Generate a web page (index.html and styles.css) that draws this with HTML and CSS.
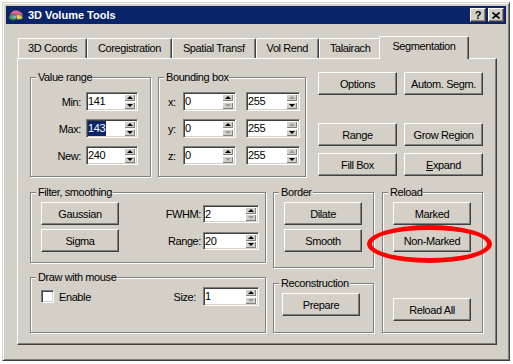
FILE: index.html
```html
<!DOCTYPE html>
<html lang="en">
<head>
    <meta charset="UTF-8">
    <meta name="viewport" content="width=device-width, initial-scale=1.0">
    <title>3D Volume Tools</title>
    <link rel="stylesheet" href="styles.css">
</head>
<body>
    <div class="window">
        <div class="titlebar">
            <svg class="app-icon" width="16" height="16" viewBox="0 0 16 16">
                <path d="M2 9 C2 5 6 2.5 9 3.5 C12 4 15 6 14.5 9 Z" fill="#e0609a" stroke="#505050" stroke-width=".7"/>
                <path d="M1 11 C1 8 4 6.5 7 7.5 L9 12 C6 13.5 3 13.5 1 11 Z" fill="#3fa04e" stroke="#505050" stroke-width=".7"/>
                <path d="M8 8 C11 7 14 8 15 11 C12 13 10 12.5 8.5 12 Z" fill="#e6d24a" stroke="#505050" stroke-width=".7"/>
                <ellipse cx="6.5" cy="10" rx="2" ry="1.4" fill="#86a8e0"/>
            </svg>
            <span class="title">3D Volume Tools</span>
            <div class="caption-btns">
                <span class="cap-btn help">?</span>
                <span class="cap-btn close">
                    <svg width="8" height="7" viewBox="0 0 8 7"><path d="M0.5 0.5 L7.5 6.5 M7.5 0.5 L0.5 6.5" stroke="#000" stroke-width="1.6"/></svg>
                </span>
            </div>
        </div>

        <div class="tabs">
            <div class="tab">3D Coords</div>
            <div class="tab">Coregistration</div>
            <div class="tab">Spatial Transf</div>
            <div class="tab">Vol Rend</div>
            <div class="tab">Talairach</div>
            <div class="tab active">Segmentation</div>
        </div>

        <div class="panel">
            <div class="top-row">
                <div class="group value-range">
                    <div class="group-title">Value range</div>
                    <div class="field">
                        <label>Min:</label>
                        <div class="spin w52"><span class="val">141</span><div class="spinner"><span class="up"></span><span class="down"></span></div></div>
                    </div>
                    <div class="field">
                        <label>Max:</label>
                        <div class="spin w52"><span class="val"><span class="sel">143</span></span><div class="spinner"><span class="up"></span><span class="down"></span></div></div>
                    </div>
                    <div class="field">
                        <label>New:</label>
                        <div class="spin w52"><span class="val">240</span><div class="spinner"><span class="up"></span><span class="down"></span></div></div>
                    </div>
                </div>

                <div class="group bbox">
                    <div class="group-title">Bounding box</div>
                    <div class="field">
                        <label>x:</label>
                        <div class="spin w53"><span class="val">0</span><div class="spinner"><span class="up"></span><span class="down off"></span></div></div>
                        <div class="spin w54"><span class="val">255</span><div class="spinner"><span class="up off"></span><span class="down"></span></div></div>
                    </div>
                    <div class="field">
                        <label>y:</label>
                        <div class="spin w53"><span class="val">0</span><div class="spinner"><span class="up"></span><span class="down off"></span></div></div>
                        <div class="spin w54"><span class="val">255</span><div class="spinner"><span class="up off"></span><span class="down"></span></div></div>
                    </div>
                    <div class="field">
                        <label>z:</label>
                        <div class="spin w53"><span class="val">0</span><div class="spinner"><span class="up"></span><span class="down off"></span></div></div>
                        <div class="spin w54"><span class="val">255</span><div class="spinner"><span class="up off"></span><span class="down"></span></div></div>
                    </div>
                </div>

                <div class="btn-grid">
                    <button class="btn">Options</button>
                    <button class="btn">Autom. Segm.</button>
                    <div class="gap"></div>
                    <button class="btn">Range</button>
                    <button class="btn">Grow Region</button>
                    <button class="btn">Fill Box</button>
                    <button class="btn"><u>E</u>xpand</button>
                </div>
            </div>

            <div class="bottom-row">
                <div class="col">
                    <div class="group filter">
                        <div class="group-title">Filter, smoothing</div>
                        <div class="line">
                            <button class="btn">Gaussian</button>
                            <div class="pair">
                                <label>FWHM:</label>
                                <div class="spin w56 short"><span class="val">2</span><div class="spinner"><span class="up"></span><span class="down off"></span></div></div>
                            </div>
                        </div>
                        <div class="line">
                            <button class="btn">Sigma</button>
                            <div class="pair">
                                <label>Range:</label>
                                <div class="spin w56 short"><span class="val">20</span><div class="spinner"><span class="up"></span><span class="down"></span></div></div>
                            </div>
                        </div>
                    </div>

                    <div class="group draw">
                        <div class="group-title">Draw with mouse</div>
                        <div class="line small">
                            <div class="pair">
                                <span class="check"></span>
                                <span class="check-label">Enable</span>
                            </div>
                            <div class="pair">
                                <label class="size-label">Size:</label>
                                <div class="spin w56"><span class="val">1</span><div class="spinner"><span class="up"></span><span class="down off"></span></div></div>
                            </div>
                        </div>
                    </div>
                </div>

                <div class="col mid">
                    <div class="group border-grp">
                        <div class="group-title">Border</div>
                        <button class="btn first">Dilate</button>
                        <button class="btn next">Smooth</button>
                    </div>
                    <div class="group recon">
                        <div class="group-title">Reconstruction</div>
                        <button class="btn first">Prepare</button>
                    </div>
                </div>

                <div class="col last">
                    <div class="group reload">
                        <div class="group-title">Reload</div>
                        <button class="btn first">Marked</button>
                        <button class="btn next">Non-Marked</button>
                        <button class="btn all">Reload All</button>
                        <div class="mark"></div>
                    </div>
                </div>
            </div>
        </div>
    </div>
</body>
</html>
```

FILE: styles.css
```css
body {
    margin: 0;
    background: #fff;
    font-family: "Liberation Sans", Arial, sans-serif;
    font-size: 11px;
    letter-spacing: -0.4px;
    color: #000;
}

.window {
    margin: 2px 0 0 2px;
    width: 508px;
    height: 359px;
    box-sizing: border-box;
    padding: 3px;
    background: #d4d0c8;
    border: 1px solid;
    border-color: #d4d0c8 #404040 #404040 #d4d0c8;
    box-shadow: inset 1px 1px 0 #fff, inset -1px -1px 0 #808080;
}

/* title bar */
.titlebar {
    display: flex;
    align-items: center;
    height: 18px;
    padding-left: 2px;
    background: #0a246a;
}
.app-icon {
    margin-right: 4px;
}
.title {
    color: #fff;
    font-weight: bold;
    letter-spacing: 0;
}
.caption-btns {
    display: flex;
    margin-left: auto;
    padding-right: 2px;
}
.cap-btn {
    display: flex;
    align-items: center;
    justify-content: center;
    width: 16px;
    height: 14px;
    box-sizing: border-box;
    background: #d4d0c8;
    border: 1px solid;
    border-color: #fff #404040 #404040 #fff;
    box-shadow: inset -1px -1px 0 #808080;
    font-weight: bold;
    font-size: 11px;
    letter-spacing: 0;
    line-height: 12px;
}
.cap-btn.close {
    margin-left: 2px;
}

/* tabs */
.tabs {
    display: flex;
    align-items: flex-end;
    height: 22px;
    margin: 12px 0 0 12px;
}
.tab {
    height: 20px;
    box-sizing: border-box;
    padding: 0 10px;
    line-height: 19px;
    border-top: 1px solid #fff;
    border-left: 1px solid #fff;
    border-right: 1px solid #404040;
    border-radius: 2px 2px 0 0;
    box-shadow: inset -1px 0 0 #808080;
    white-space: nowrap;
}
.tab:first-child {
    padding: 0 9px;
}
.tab.active {
    position: relative;
    z-index: 1;
    height: 23px;
    margin: 0 -2px -1px -2px;
    padding: 0 12px;
    background: #d4d0c8;
}

/* tab page */
.panel {
    width: 480px;
    height: 287px;
    margin-left: 11px;
    box-sizing: border-box;
    padding: 13px 0 0 12px;
    border: 1px solid;
    border-color: #fff #404040 #404040 #fff;
    box-shadow: inset -1px -1px 0 #808080;
}
.top-row, .bottom-row {
    display: flex;
    align-items: flex-start;
}
.bottom-row {
    margin-top: 15px;
}
.col {
    display: flex;
    flex-direction: column;
}
.col.mid {
    margin-left: 7px;
}
.col.last {
    margin-left: 8px;
}

/* group boxes */
.group {
    position: relative;
    box-sizing: border-box;
    border: 1px solid #808080;
    box-shadow: inset 1px 1px 0 #fff, 1px 1px 0 #fff;
}
.group-title {
    width: max-content;
    height: 13px;
    margin: -7px 0 0 5px;
    padding: 0 1px 0 2px;
    line-height: 13px;
    background: #d4d0c8;
}
.value-range {
    width: 121px;
    height: 100px;
    margin-top: 5px;
}
.bbox {
    width: 148px;
    height: 100px;
    margin: 5px 0 0 7px;
}
.filter {
    width: 236px;
    height: 71px;
}
.draw {
    width: 236px;
    height: 56px;
    margin-top: 14px;
}
.border-grp {
    width: 101px;
    height: 76px;
}
.recon {
    width: 101px;
    height: 50px;
    margin-top: 15px;
}
.reload {
    width: 101px;
    height: 141px;
}

/* labelled spin fields */
.field {
    display: flex;
    align-items: center;
    height: 19px;
    margin-top: 8px;
}
.value-range label {
    width: 50px;
    margin-right: 5px;
    text-align: right;
}
.bbox label {
    width: 15px;
    margin-left: 9px;
}
.bbox .w54 {
    margin-left: 10px;
}

.spin {
    display: flex;
    height: 19px;
    box-sizing: border-box;
    background: #fff;
    border: 1px solid;
    border-color: #808080 #fff #fff #808080;
    box-shadow: inset 1px 1px 0 #404040, inset -1px -1px 0 #d4d0c8;
}
.spin.short {
    height: 18px;
}
.w52 { width: 52px; }
.w53 { width: 53px; }
.w54 { width: 54px; }
.w56 { width: 56px; }
.val {
    flex: 1;
    padding-left: 1px;
    line-height: 17px;
}
.short .val {
    line-height: 16px;
}
.sel {
    display: inline-block;
    padding-right: 1px;
    background: #0a246a;
    color: #fff;
    line-height: 15px;
}
.spinner {
    display: flex;
    flex-direction: column;
    justify-content: space-between;
    width: 11px;
    margin: 1px 2px 1px 0;
}
.spinner span {
    display: flex;
    align-items: center;
    justify-content: center;
    height: 7px;
    background: #d4d0c8;
    box-shadow: inset 1px 1px 0 #fff, inset -1px -1px 0 #808080;
}
.short .spinner span {
    height: 7px;
}
.spinner .up::after {
    content: "";
    border-left: 3px solid transparent;
    border-right: 3px solid transparent;
    border-bottom: 3px solid #000;
}
.spinner .down::after {
    content: "";
    border-left: 3px solid transparent;
    border-right: 3px solid transparent;
    border-top: 3px solid #000;
}
.spinner .off::after {
    border-bottom-color: #9a9a9a;
    border-top-color: #9a9a9a;
}
.spinner .up.off::after {
    border-top: 0;
}
.spinner .down.off::after {
    border-bottom: 0;
}

/* buttons */
.btn {
    display: block;
    width: 78px;
    height: 23px;
    box-sizing: border-box;
    padding: 0;
    background: #d4d0c8;
    border: 1px solid;
    border-color: #fff #404040 #404040 #fff;
    box-shadow: inset -1px -1px 0 #808080;
    font: inherit;
    letter-spacing: inherit;
    color: #000;
    line-height: 20px;
    text-align: center;
}
.btn-grid {
    display: grid;
    grid-template-columns: 79px 79px;
    grid-template-rows: 23px 14px 23px 23px;
    column-gap: 7px;
    row-gap: 7px;
    margin-left: 12px;
}
.btn-grid .btn {
    width: 79px;
}
.btn-grid .gap {
    grid-column: span 2;
}
.group .btn.first {
    margin: 3px 0 0 10px;
}
.group .btn.next {
    margin: 4px 0 0 10px;
}
.recon .btn.first {
    margin-left: 8px;
}
.reload .btn.all {
    margin: 46px 0 0 10px;
}

/* rows inside the wide groups */
.line {
    display: flex;
    align-items: center;
    justify-content: space-between;
    height: 23px;
    margin-top: 4px;
    padding: 0 6px 0 10px;
}
.filter .line:nth-child(2) {
    margin-top: 3px;
}
.line.small {
    height: 19px;
    margin-top: 3px;
}
.pair {
    display: flex;
    align-items: center;
}
.pair label {
    margin-right: 2px;
}
.pair .size-label {
    margin-right: 7px;
}
.check {
    width: 13px;
    height: 13px;
    box-sizing: border-box;
    background: #fff;
    border: 1px solid;
    border-color: #808080 #fff #fff #808080;
    box-shadow: inset 1px 1px 0 #404040, inset -1px -1px 0 #d4d0c8;
}
.check-label {
    margin-left: 5px;
}

/* red annotation ring */
.mark {
    position: absolute;
    left: -16px;
    top: 32px;
    width: 125px;
    height: 38px;
    box-sizing: border-box;
    border: 5px solid #f00;
    border-radius: 50%;
    pointer-events: none;
}
```
